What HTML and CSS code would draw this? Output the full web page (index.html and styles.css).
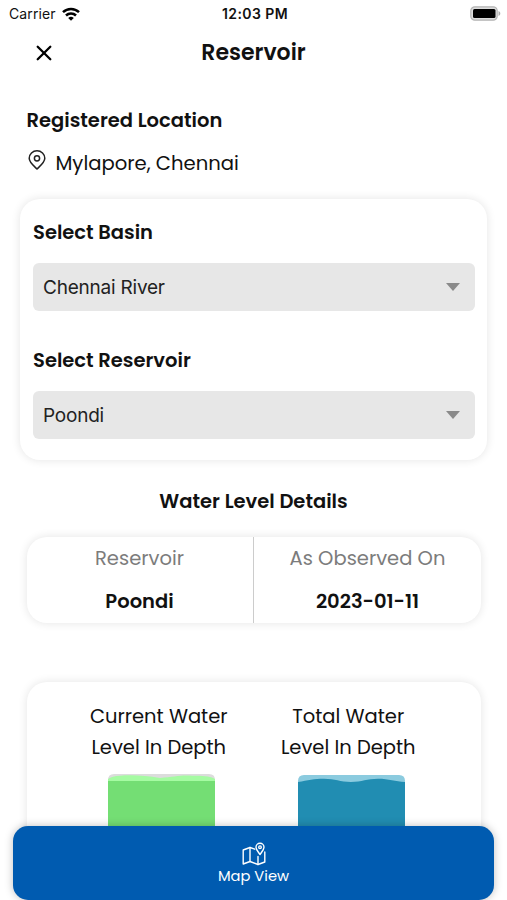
FILE: index.html
```
<!DOCTYPE html>
<html lang="en">
<head>
    <meta charset="UTF-8">
    <meta name="viewport" content="width=device-width, initial-scale=1.0">
    <title>Reservoir</title>
    <link rel="stylesheet" href="styles.css">
</head>
<body>
    <div class="screen">
        <div class="status-bar">
            <div class="carrier">
                <span>Carrier</span>
                <svg width="18" height="14" viewBox="0 0 18 14" fill="none" stroke="#000" stroke-width="2.5">
                    <path d="M1 5.2a11.4 11.4 0 0 1 16 0"></path>
                    <path d="M4 8.5a7.1 7.1 0 0 1 10 0"></path>
                    <path d="M9 13.8L6.2 11a4 4 0 0 1 5.6 0z" fill="#000" stroke="none"></path>
                </svg>
            </div>
            <span class="time">12:03 PM</span>
            <svg class="battery" width="31" height="15" viewBox="0 0 31 15">
                <rect x="0.8" y="0.8" width="26.4" height="13.4" rx="4" fill="#ddd" stroke="#b4b4b4" stroke-width="1.2"></rect>
                <rect x="3" y="3" width="22.5" height="9" rx="1.5" fill="#000"></rect>
                <path d="M28.5 5v5c1.1-.4 1.8-1.3 1.8-2.5S29.6 5.4 28.5 5z" fill="#aaa"></path>
            </svg>
        </div>

        <header class="header">
            <button class="close" aria-label="Close">
                <svg width="16" height="16" viewBox="0 0 16 16" stroke="#000" stroke-width="2.3" stroke-linecap="round">
                    <path d="M1.7 1.7l12.6 12.6M14.3 1.7L1.7 14.3"></path>
                </svg>
            </button>
            <h1>Reservoir</h1>
        </header>

        <section class="location">
            <h2>Registered Location</h2>
            <div class="location-row">
                <svg width="18" height="20" viewBox="0 0 18 20" fill="none" stroke="#222" stroke-width="1.5">
                    <path d="M9 19C5.5 15.6 1.2 12.4 1.2 8.3a7.8 7.5 0 0 1 15.6 0C16.8 12.4 12.5 15.6 9 19z"></path>
                    <circle cx="9" cy="8.3" r="2.6"></circle>
                </svg>
                <span>Mylapore, Chennai</span>
            </div>
        </section>

        <section class="card filters">
            <h2>Select Basin</h2>
            <div class="select">
                <span>Chennai River</span>
                <i class="arrow"></i>
            </div>
            <h2>Select Reservoir</h2>
            <div class="select">
                <span>Poondi</span>
                <i class="arrow"></i>
            </div>
        </section>

        <h2 class="details-title">Water Level Details</h2>

        <section class="card details">
            <div class="detail">
                <span class="detail-name">Reservoir</span>
                <span class="detail-value">Poondi</span>
            </div>
            <div class="detail">
                <span class="detail-name">As Observed On</span>
                <span class="detail-value">2023-01-11</span>
            </div>
        </section>

        <section class="card levels">
            <div class="level">
                <p>Current Water<br>Level In Depth</p>
                <svg class="tank" width="107" height="126" viewBox="0 0 107 126">
                    <path d="M0 6q0-6 6-6h95q6 0 6 6v120H0z" fill="#dcdcdc"></path>
                    <path d="M0 5Q4 2 12 1.8C26 .6 38 2 52 4C66 3 72 1 84 1.8C96 1.5 103 2.500 107 5v121H0z" fill="#a5fba2"></path>
                    <path d="M0 7h107v119H0z" fill="#74de74"></path>
                </svg>
            </div>
            <div class="level">
                <p>Total Water<br>Level In Depth</p>
                <svg class="tank total" width="107" height="126" viewBox="0 0 107 126">
                    <path d="M0 7q0-6 6-6h95q6 0 6 6v119H0z" fill="#8bcbdf"></path>
                    <path d="M0 8C10 6.500 16 4.800 26 4.800C37 4.800 42 8 53 8C64 8 69 4.800 80 4.800C91 4.800 97 7.500 107 8v118H0z" fill="#218db2"></path>
                </svg>
            </div>
        </section>

        <button class="map-button">
            <svg width="24" height="24" viewBox="0 0 24 24" fill="none" stroke="#fff" stroke-width="1.4" stroke-linejoin="round" stroke-linecap="round">
                <path d="M12.8 7.2L8 5.5 1.2 8v14L8 19.5l8 3 6.8-2.5V10"></path>
                <path d="M8 5.5v14M16 14.5v8"></path>
                <path d="M18 12.5c-1.5-2.3-4-4.8-4-7.3a4 4 0 0 1 8 0c0 2.5-2.5 5-4 7.3z"></path>
                <circle cx="18" cy="5.2" r="1.3"></circle>
            </svg>
            <span>Map View</span>
        </button>
    </div>
</body>
</html>
```

FILE: styles.css
```
:root {
    --primary: #005bb0;
    --text: #111;
    --muted: #7c7c7c;
    --field: #e7e7e7;
    --shadow: 0 0 10px rgba(0, 0, 0, 0.11);
}

* {
    margin: 0;
    padding: 0;
    box-sizing: border-box;
}

body {
    font-family: Poppins, Inter, sans-serif;
    background-color: #fff;
    color: var(--text);
    overflow: hidden;
}

button {
    font-family: inherit;
    border: none;
    background: none;
    cursor: pointer;
}

.screen {
    position: relative;
    height: 900px;
    overflow: hidden;
}

.status-bar {
    height: 27px;
    padding: 0 6px 0 9px;
    display: grid;
    grid-template-columns: 1fr auto 1fr;
    align-items: center;
    font-family: Inter, sans-serif;
    font-size: 14px;
}

.carrier {
    display: flex;
    align-items: center;
    gap: 6px;
    letter-spacing: 0.1px;
}

.time {
    font-weight: 600;
    letter-spacing: 0.4px;
}

.battery {
    justify-self: end;
}

.header {
    height: 50px;
    padding: 0 36px;
    display: grid;
    grid-template-columns: 16px 1fr 16px;
    align-items: center;
}

.close {
    display: flex;
    padding-top: 2px;
}

h1 {
    padding-top: 2px;
    text-align: center;
    font-size: 22px;
    font-weight: 600;
    line-height: 34px;
}

h2 {
    font-size: 19.5px;
    font-weight: 600;
    line-height: 30px;
}

.location {
    height: 122px;
    padding: 29px 27px 0 26.5px;
}

.location-row {
    display: flex;
    gap: 10px;
    padding-top: 12px;
    line-height: 30px;
    font-size: 19.6px;
}

.location-row svg {
    margin-top: 2px;
    margin-left: 1px;
}

.card {
    background: #fff;
    border-radius: 20px;
    box-shadow: var(--shadow);
}

.filters {
    margin: 0 20px;
    height: 261px;
    padding: 19px 12px 0 13px;
}

.select {
    height: 48px;
    margin: 15px 0 35px;
    padding: 0 15px 0 10px;
    border-radius: 6px;
    background: var(--field);
    display: flex;
    align-items: center;
    justify-content: space-between;
    font-family: Inter, sans-serif;
    font-size: 19px;
    letter-spacing: -0.22px;
    color: #222;
}

.arrow {
    border: 7px solid transparent;
    border-top: 8px solid #8a8a8a;
    border-bottom: none;
}

.details-title {
    margin: 27px 0 20px;
    text-align: center;
}

.details {
    height: 86px;
    margin: 0 26px 0 27px;
    display: grid;
    grid-template-columns: 1fr 1fr;
}

.detail {
    display: flex;
    flex-direction: column;
    align-items: center;
    gap: 13px;
    padding-top: 7px;
    font-size: 19.5px;
    line-height: 30px;
}

.detail:first-child {
    padding-right: 1px;
    border-right: 1px solid #ccc;
}

.detail-name {
    color: var(--muted);
}

.detail-value {
    font-weight: 600;
}

.levels {
    height: 260px;
    margin: 59px 26px 0 27px;
    padding: 19px 38px 0 37px;
    display: grid;
    grid-template-columns: 1fr 1fr;
}

.level {
    display: flex;
    flex-direction: column;
    align-items: center;
    gap: 11px;
}

.level p {
    text-align: center;
    font-size: 19.5px;
    line-height: 31px;
}

.tank {
    margin-left: 5px;
}

.tank.total {
    margin-left: 7px;
}

.map-button {
    position: absolute;
    left: 13px;
    right: 13px;
    bottom: 0;
    height: 74px;
    padding-top: 1px;
    border-radius: 15px;
    background: var(--primary);
    box-shadow: 0 0 9px rgba(0, 0, 0, 0.25);
    color: #fff;
    font-size: 14.7px;
    line-height: 20px;
    display: flex;
    flex-direction: column;
    align-items: center;
    justify-content: center;
}
```
